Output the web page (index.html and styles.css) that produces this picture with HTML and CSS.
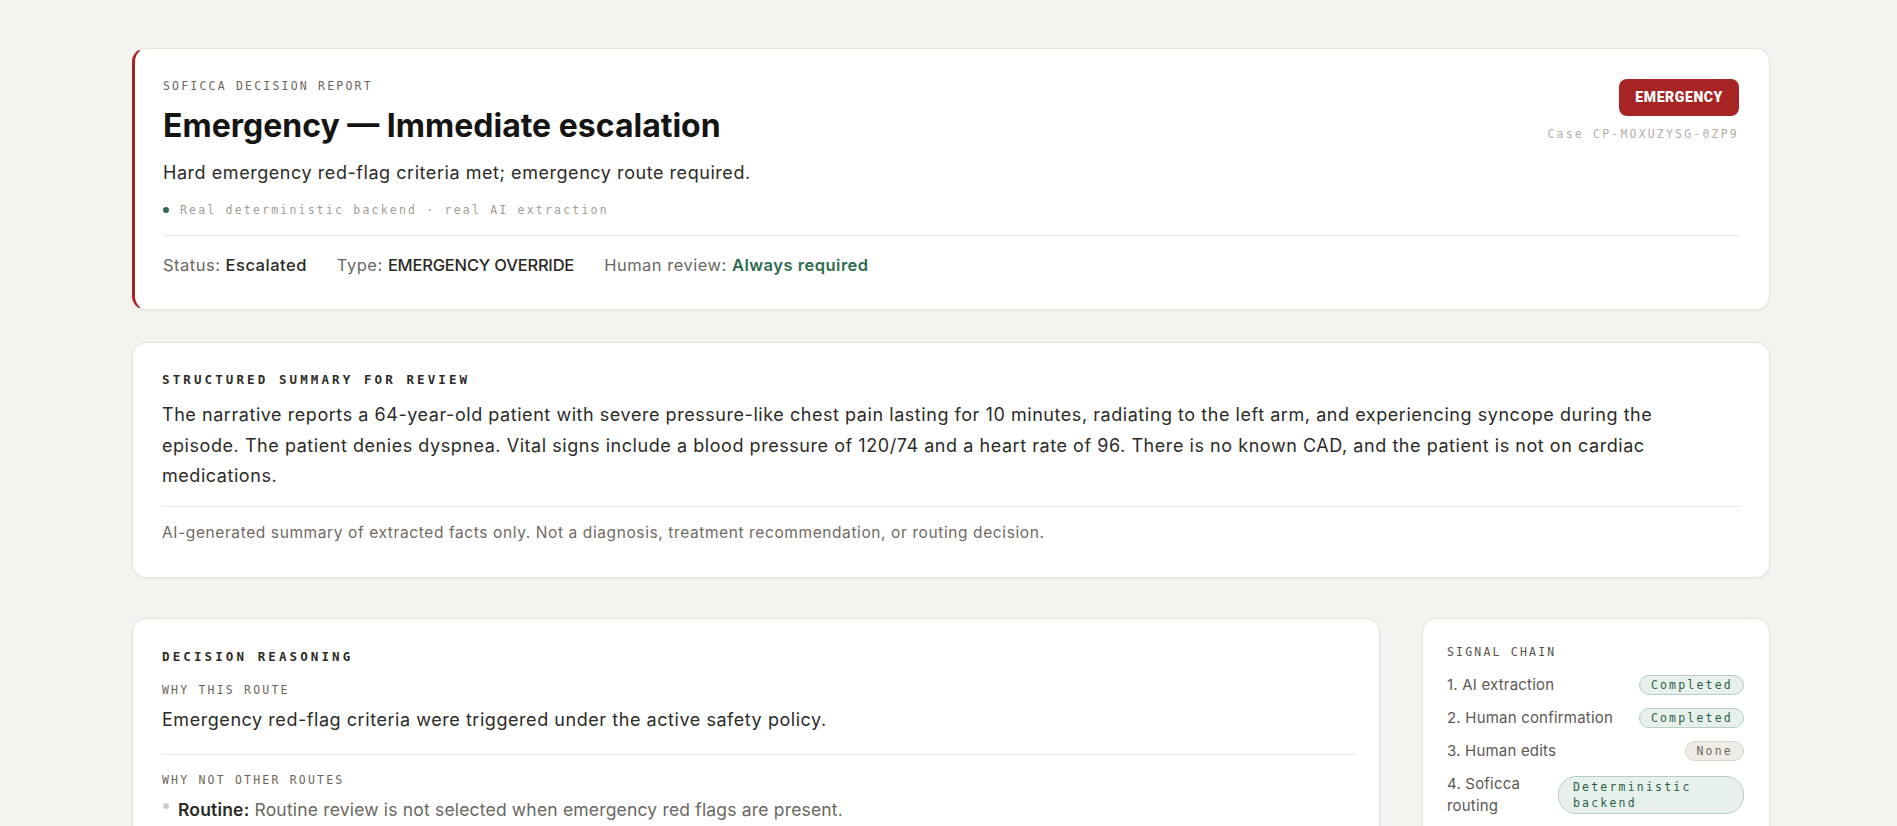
FILE: index.html
```html
<!DOCTYPE html>
<html lang="en">
<head>
    <meta charset="UTF-8">
    <meta name="viewport" content="width=device-width, initial-scale=1.0">
    <title>Soficca Decision Report</title>
    <link rel="stylesheet" href="styles.css">
</head>
<body>
    <main class="report">

        <!-- Header card: route verdict -->
        <section class="card card-verdict">
            <div class="verdict-top">
                <div class="verdict-main">
                    <div class="eyebrow">Soficca Decision Report</div>
                    <h1 class="verdict-title">Emergency — Immediate escalation</h1>
                    <p class="verdict-sub">Hard emergency red-flag criteria met; emergency route required.</p>
                    <div class="source-line"><span class="dot"></span>Real deterministic backend · real AI extraction</div>
                </div>
                <div class="verdict-side">
                    <span class="route-badge">EMERGENCY</span>
                    <span class="case-id">Case CP-MOXUZYSG-0ZP9</span>
                </div>
            </div>
            <div class="meta-row">
                <span class="meta">Status: <b>Escalated</b></span>
                <span class="meta">Type: <b class="caps">EMERGENCY OVERRIDE</b></span>
                <span class="meta">Human review: <b class="ok">Always required</b></span>
            </div>
        </section>

        <!-- Summary -->
        <section class="card card-summary">
            <h2 class="section-title">Structured summary for review</h2>
            <p class="summary-text">The narrative reports a 64-year-old patient with severe pressure-like chest pain lasting for 10 minutes, radiating to the left arm, and experiencing syncope during the episode. The patient denies dyspnea. Vital signs include a blood pressure of 120/74 and a heart rate of 96. There is no known CAD, and the patient is not on cardiac medications.</p>
            <p class="footnote">AI-generated summary of extracted facts only. Not a diagnosis, treatment recommendation, or routing decision.</p>
        </section>

        <div class="columns">
            <section class="card card-reasoning">
                <h2 class="section-title">Decision reasoning</h2>
                <div class="sub-label">Why this route</div>
                <p class="reason-text">Emergency red-flag criteria were triggered under the active safety policy.</p>
                <div class="sub-label sub-label-sep">Why not other routes</div>
                <ul class="route-list">
                    <li><b>Routine:</b> Routine review is not selected when emergency red flags are present.</li>
                </ul>
            </section>

            <aside class="card card-chain">
                <div class="chain-title">Signal chain</div>
                <ul class="chain">
                    <li><span>1. AI extraction</span><span class="pill pill-done">Completed</span></li>
                    <li><span>2. Human confirmation</span><span class="pill pill-done">Completed</span></li>
                    <li><span>3. Human edits</span><span class="pill pill-none">None</span></li>
                    <li><span class="step-narrow">4. Soficca routing</span><span class="pill pill-done pill-wide">Deterministic backend</span></li>
                </ul>
            </aside>
        </div>

    </main>
</body>
</html>
```

FILE: styles.css
```css
body {
    margin: 0;
    padding: 48px 127px 60px 132px;
    background-color: #f4f3ef;
    font-family: Inter, "Noto Sans", Arial, sans-serif;
    color: #2a2926;
}

/* Общая карточка */
.card {
    background-color: #fff;
    border: 1px solid #e8e4dc;
    border-radius: 14px;
    box-shadow: 0 1px 3px rgba(40, 30, 20, 0.05);
}

/* моно-подписи */
.eyebrow,
.source-line,
.case-id,
.sub-label,
.chain-title,
.pill {
    font-family: "DejaVu Sans Mono", "Liberation Mono", monospace;
    font-size: 11.5px;
    letter-spacing: 2.2px;
    line-height: 16px;
}

/* Верхняя карточка с решением */
.card-verdict {
    border-left: 3px solid #a62424;
    padding: 29px 30px 32px 28px;
    margin-bottom: 32px;
}

.verdict-top {
    display: flex;
    justify-content: space-between;
    align-items: flex-start;
    border-bottom: 1px solid #ebe8e2;
    padding-bottom: 17px;
}

.eyebrow {
    text-transform: uppercase;
    color: #6d655c;
}

.verdict-title {
    margin: 10px 0 0;
    font-size: 32px;
    font-weight: 700;
    letter-spacing: 0;
    line-height: 44px;
    color: #151412;
}

.verdict-sub {
    margin: 12px 0 0;
    font-size: 18px;
    letter-spacing: 0.55px;
    line-height: 26px;
    color: #2c2b28;
}

.source-line {
    margin-top: 16px;
    color: #a39d94;
    display: flex;
    align-items: center;
}

.dot {
    width: 6px;
    height: 6px;
    border-radius: 50%;
    background-color: #2f6b4f;
    margin-right: 11px;
}

.verdict-side {
    display: flex;
    flex-direction: column;
    align-items: flex-end;
    padding-top: 1px;
}

.route-badge {
    background-color: #a62424;
    color: #fff;
    font-family: Roboto, Arial, sans-serif;
    font-weight: 900;
    font-size: 14px;
    letter-spacing: 0.6px;
    padding: 0 16px;
    height: 37px;
    line-height: 37px;
    border-radius: 8px;
}

.case-id {
    margin-top: 10px;
    color: #b3aea6;
}

.meta-row {
    display: flex;
    gap: 30px;
    padding-top: 17px;
    font-size: 16.5px;
    letter-spacing: 0.5px;
    line-height: 24px;
}

.meta {
    color: #6a6862;
}

.meta b {
    font-weight: 500;
    color: #2a2926;
}

.meta b.caps {
    letter-spacing: -0.2px;
}

.meta b.ok {
    color: #2f6b4f;
    font-weight: 600;
}

/* Сводка */
.card-summary {
    padding: 29px 29px 33px;
    margin-bottom: 40px;
}

.section-title {
    margin: 0;
    font-family: "DejaVu Sans Mono", "Liberation Mono", monospace;
    font-size: 12.5px;
    font-weight: 700;
    letter-spacing: 3.1px;
    text-transform: uppercase;
    color: #2e2c28;
    line-height: 16px;
}

.summary-text {
    margin: 12px 0 0;
    max-width: 1540px;
    font-size: 18px;
    letter-spacing: 0.55px;
    line-height: 30.5px;
    color: #2c2b28;
}

.footnote {
    margin: 14px 0 0;
    padding-top: 15px;
    border-top: 1px solid #ebe8e2;
    font-size: 15.5px;
    letter-spacing: 0.6px;
    line-height: 22px;
    color: #6f6a63;
}

/* Нижние колонки */
.columns {
    display: grid;
    grid-template-columns: 1fr 348px;
    gap: 42px;
    align-items: start;
}

.card-reasoning {
    padding: 30px 24px 28px 29px;
}

.sub-label {
    margin-top: 17px;
    text-transform: uppercase;
    color: #6d655c;
}

.sub-label-sep {
    border-top: 1px solid #ebe8e2;
    padding-top: 17px;
    margin-top: 22px;
}

.reason-text {
    margin: 10px 0 0;
    font-size: 18px;
    letter-spacing: 0.55px;
    line-height: 24px;
    color: #2c2b28;
}

.route-list {
    list-style: none;
    margin: 9px 0 0;
    padding: 0;
}

.route-list li {
    position: relative;
    padding-left: 16px;
    font-size: 17.5px;
    letter-spacing: 0.18px;
    line-height: 26px;
    color: #6a6862;
    margin-bottom: 6px;
}

.route-list li::before {
    content: "";
    position: absolute;
    left: 1px;
    top: 6px;
    width: 6px;
    height: 6px;
    border-radius: 50%;
    background-color: #cfcbc4;
}

.route-list b {
    color: #2a2926;
    font-weight: 600;
}

/* Цепочка сигналов */
.card-chain {
    padding: 25px 25px 24px 24px;
}

.chain-title {
    text-transform: uppercase;
    color: #55514b;
}

.chain {
    list-style: none;
    margin: 14px 0 0;
    padding: 0;
}

.chain li {
    display: flex;
    justify-content: space-between;
    align-items: center;
    gap: 18px;
    font-size: 15px;
    letter-spacing: 0.2px;
    line-height: 22px;
    color: #5b5853;
    margin-bottom: 11px;
}

.step-narrow {
    width: 80px;
}

.pill {
    padding: 1px 10px 1px 11px;
    border-radius: 12px;
    white-space: nowrap;
}

.pill-done {
    background-color: #e8f0ec;
    border: 1px solid #b7cfc3;
    color: #2a6246;
}

.pill-none {
    background-color: #efece6;
    border: 1px solid #d9d4cb;
    color: #6d6861;
}

.pill-wide {
    white-space: normal;
    flex: 1;
    max-width: 156px;
    border-radius: 18px;
    padding: 2px 14px;
}
```
